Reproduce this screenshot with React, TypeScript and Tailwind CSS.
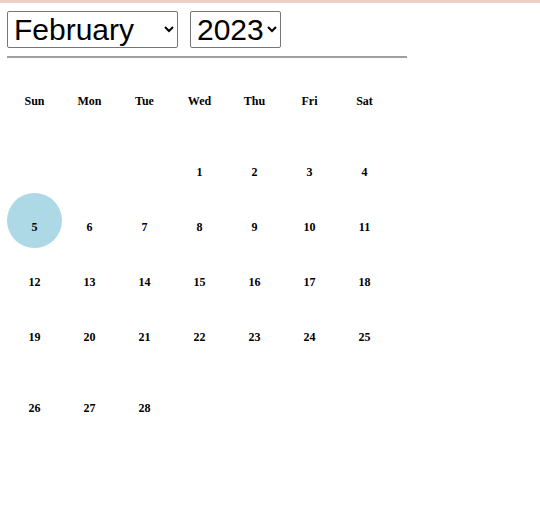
import React, { useState } from 'react';

const MONTHS = [
    'January', 'February', 'March', 'April', 'May', 'June',
    'July', 'August', 'September', 'October', 'November', 'December'
];
const DAYS = ['Sun', 'Mon', 'Tue', 'Wed', 'Thu', 'Fri', 'Sat'];

export default function App() {
    const [month, setMonth] = useState(1);
    const [year, setYear] = useState(2023);
    const selected = 5;

    const first = new Date(year, month, 1).getDay();
    const count = new Date(year, month + 1, 0).getDate();
    const cells: (number | null)[] = [];
    for (let i = 0; i < first; i++) cells.push(null);
    for (let d = 1; d <= count; d++) cells.push(d);
    while (cells.length % 7) cells.push(null);
    const weeks: (number | null)[][] = [];
    for (let i = 0; i < cells.length; i += 7) weeks.push(cells.slice(i, i + 7));

    return (
        <div className="min-h-[525px] bg-white border-t-[3px] border-[#f0d0c6] font-['Times_New_Roman','Liberation_Serif',serif] text-black">
            <div className="pl-[7px] pt-[8px]">
                {/* Pickers */}
                <div className="flex items-center gap-[12px]">
                    <select
                        value={month}
                        onChange={(e) => setMonth(Number(e.target.value))}
                        className="h-[37px] w-[171px] border border-[#767676] rounded-[2px] bg-white pl-[2px] text-[30px] leading-none font-['Arial','Liberation_Sans',sans-serif]"
                    >
                        {MONTHS.map((m, i) => (
                            <option key={m} value={i}>{m}</option>
                        ))}
                    </select>
                    <select
                        value={year}
                        onChange={(e) => setYear(Number(e.target.value))}
                        className="h-[37px] w-[91px] border border-[#767676] rounded-[2px] bg-white pl-[2px] text-[30px] leading-none font-['Arial','Liberation_Sans',sans-serif]"
                    >
                        {[2020, 2021, 2022, 2023, 2024, 2025].map((y) => (
                            <option key={y} value={y}>{y}</option>
                        ))}
                    </select>
                </div>

                <div className="mt-[8px] w-[400px] h-[2px] bg-[#a0a0a0]" />

                {/* Weekday header */}
                <div className="mt-[9px] grid grid-cols-[repeat(7,55px)]">
                    {DAYS.map((d) => (
                        <div key={d} className="h-[55px] pt-[27px] text-center text-[12px] leading-[14px] font-bold">
                            {d}
                        </div>
                    ))}
                </div>

                {/* Weeks */}
                {weeks.map((week, wi) => (
                    <div
                        key={wi}
                        className={`grid grid-cols-[repeat(7,55px)] ${wi === 0 || wi === weeks.length - 1 ? 'mt-[16px]' : ''}`}
                    >
                        {week.map((d, di) => (
                            <div
                                key={di}
                                className={`h-[55px] pt-[27px] text-center text-[12px] leading-[14px] font-bold ${d === selected ? 'rounded-full bg-[#add8e6]' : ''}`}
                            >
                                {d ?? ''}
                            </div>
                        ))}
                    </div>
                ))}
            </div>
        </div>
    );
}
